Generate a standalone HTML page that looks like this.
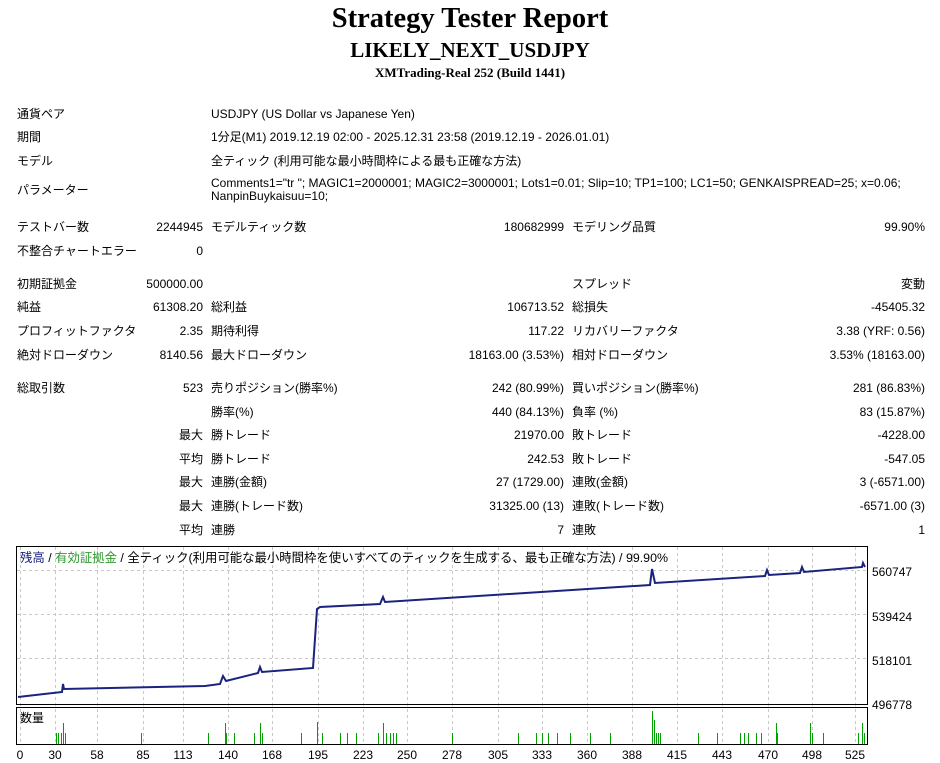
<!DOCTYPE html><html><head><meta charset="utf-8"><style>
body{margin:0;width:940px;height:763px;background:#fff;position:relative;overflow:hidden;font-family:"Liberation Sans","Noto Sans CJK JP",sans-serif;font-size:12px;color:#000}
.t{position:absolute;white-space:nowrap;line-height:14px}
.r{text-align:right}
h1,h2,h3{position:absolute;left:0;width:940px;text-align:center;margin:0;font-family:"Liberation Serif",serif;font-weight:bold}
</style></head><body>
<h1 style="top:3px;font-size:28.5px;line-height:32px">Strategy Tester Report</h1>
<h2 style="top:37px;font-size:21px;line-height:26px">LIKELY_NEXT_USDJPY</h2>
<h3 style="top:65px;font-size:13px;line-height:16px">XMTrading-Real 252 (Build 1441)</h3>
<div id="c"></div>
<script>
var rows=[
[107,"通貨ペア","","USDJPY (US Dollar vs Japanese Yen)"],
[130,"期間","","1分足(M1) 2019.12.19 02:00 - 2025.12.31 23:58 (2019.12.19 - 2026.01.01)"],
[154,"モデル","","全ティック (利用可能な最小時間枠による最も正確な方法)"],
[220,"テストバー数","2244945","モデルティック数","180682999","モデリング品質","99.90%"],
[244,"不整合チャートエラー","0"],
[277,"初期証拠金","500000.00","","","スプレッド","変動"],
[300,"純益","61308.20","総利益","106713.52","総損失","-45405.32"],
[324,"プロフィットファクタ","2.35","期待利得","117.22","リカバリーファクタ","3.38 (YRF: 0.56)"],
[348,"絶対ドローダウン","8140.56","最大ドローダウン","18163.00 (3.53%)","相対ドローダウン","3.53% (18163.00)"],
[381,"総取引数","523","売りポジション(勝率%)","242 (80.99%)","買いポジション(勝率%)","281 (86.83%)"],
[405,"","","勝率(%)","440 (84.13%)","負率 (%)","83 (15.87%)"],
[428,"","最大","勝トレード","21970.00","敗トレード","-4228.00"],
[452,"","平均","勝トレード","242.53","敗トレード","-547.05"],
[475,"","最大","連勝(金額)","27 (1729.00)","連敗(金額)","3 (-6571.00)"],
[499,"","最大","連勝(トレード数)","31325.00 (13)","連敗(トレード数)","-6571.00 (3)"],
[523,"","平均","連勝","7","連敗","1"]];
var h="";
rows.forEach(function(r){var y=r[0];
h+='<div class="t" style="left:17px;top:'+y+'px">'+r[1]+'</div>';
if(r[2])h+='<div class="t r" style="right:737px;top:'+y+'px">'+r[2]+'</div>';
if(r[3])h+='<div class="t" style="left:211px;top:'+y+'px">'+r[3]+'</div>';
if(r[4])h+='<div class="t r" style="right:376px;top:'+y+'px">'+r[4]+'</div>';
if(r[5])h+='<div class="t" style="left:572px;top:'+y+'px">'+r[5]+'</div>';
if(r[6])h+='<div class="t r" style="right:15px;top:'+y+'px">'+r[6]+'</div>';});
h+='<div class="t" style="left:17px;top:183px">パラメーター</div><div class="t" style="left:211px;top:177px;line-height:13px">Comments1="tr "; MAGIC1=2000001; MAGIC2=3000001; Lots1=0.01; Slip=10; TP1=100; LC1=50; GENKAISPREAD=25; x=0.06;<br>NanpinBuykaisuu=10;</div>';
document.getElementById('c').innerHTML=h;
</script>
<svg style="position:absolute;left:0;top:0" width="940" height="763">
<g id="g" stroke="#c8c8c8" stroke-dasharray="3,3" stroke-width="1"></g>
<rect x="16.5" y="546.5" width="851" height="158" fill="none" stroke="#000"/>
<rect x="16.5" y="707.5" width="851" height="37" fill="none" stroke="#000"/>
<polyline fill="none" stroke="#1a237e" stroke-width="2" points="18,697 62,692 63,684 64,689 205,686 220,684 223,676 226,681 258,673 260,667 262,672 313,668 317,609 320,607 380,604 383,597 385,602 650,585 652,569 655,583 765,576 767,570 769,575 800,573 802,567 804,572 862,567 863,563 865,567"/>
<g id="v" stroke="#00a000" stroke-width="1"></g>
<g font-family="Liberation Sans,sans-serif" font-size="12" fill="#000">
<text x="872" y="576">560747</text><text x="872" y="621">539424</text><text x="872" y="665">518101</text><text x="872" y="709">496778</text>
</g>
<g id="xl" font-family="Liberation Sans,sans-serif" font-size="12" text-anchor="middle"></g>
<text x="20" y="562" font-size="12.4" font-family="Liberation Sans,Noto Sans CJK JP,sans-serif" textLength="648"><tspan fill="#1a237e">残高</tspan> / <tspan fill="#2e9a2e">有効証拠金</tspan> / 全ティック(利用可能な最小時間枠を使いすべてのティックを生成する、最も正確な方法) / 99.90%</text>
<text x="20" y="722" font-size="12" font-family="Noto Sans CJK JP,sans-serif">数量</text>
</svg>
<script>
var xs=[20,55,97,143,183,228,272,318,363,407,452,498,542,587,632,677,722,768,812,855],lb=[0,30,58,85,113,140,168,195,223,250,278,305,333,360,388,415,443,470,498,525];
var g="",x="";
xs.forEach(function(p,i){g+='<line x1="'+(p+0.5)+'" y1="547" x2="'+(p+0.5)+'" y2="744"/>';x+='<text x="'+p+'" y="759">'+lb[i]+'</text>';});
[570,614,658].forEach(function(y){g+='<line x1="17" y1="'+(y+.5)+'" x2="867" y2="'+(y+.5)+'"/>';});
document.getElementById('g').innerHTML=g;document.getElementById('xl').innerHTML=x;
var vb=[[56,733],[58,733],[61,733],[63,723],[65,733],[141,733],[208,733],[225,723],[226,733],[234,733],[254,733],[260,723],[262,733],[301,733],[317,722],[322,733],[340,733],[347,733],[356,733],[378,733],[383,723],[386,733],[390,733],[393,733],[396,733],[452,733],[518,733],[536,733],[542,733],[548,733],[557,733],[570,733],[590,733],[610,733],[652,711],[654,720],[656,733],[658,733],[660,733],[698,733],[717,733],[740,733],[744,733],[748,733],[756,733],[761,733],[776,723],[777,733],[810,723],[812,733],[823,733],[858,733],[862,723],[864,733]];
var v="";vb.forEach(function(b){v+='<line x1="'+(b[0]+.5)+'" y1="'+b[1]+'" x2="'+(b[0]+.5)+'" y2="744"/>';});
document.getElementById('v').innerHTML=v;
</script>
</body></html>
